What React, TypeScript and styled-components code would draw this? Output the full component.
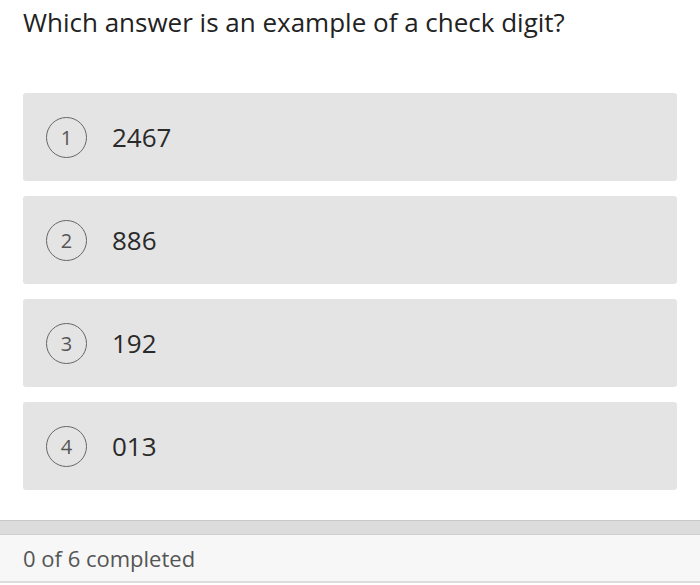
import styled, { createGlobalStyle } from "styled-components";

const GlobalStyle = createGlobalStyle`
  html, body {
    margin: 0;
    padding: 0;
    background: #ffffff;
    font-family: "Open Sans", "Liberation Sans", sans-serif;
  }
`;

const Page = styled.div`
  width: 700px;
  height: 585px;
  display: flex;
  flex-direction: column;
  overflow: hidden;
`;

const Question = styled.h1`
  margin: 0;
  padding: 4px 23px 0;
  font-size: 26px;
  font-weight: 400;
  line-height: 36px;
  color: #222;
`;

const Options = styled.div`
  display: flex;
  flex-direction: column;
  gap: 15px;
  padding: 53px 23px 0;
`;

const Option = styled.div`
  height: 88px;
  background: #e4e4e4;
  border-radius: 3px;
  display: flex;
  align-items: center;
  padding-left: 23px;
  gap: 25px;
`;

const Badge = styled.span`
  width: 39px;
  height: 39px;
  border: 1.5px solid #666;
  border-radius: 50%;
  display: flex;
  align-items: center;
  justify-content: center;
  font-size: 20px;
  color: #555;
  flex-shrink: 0;
`;

const Answer = styled.span`
  font-size: 26px;
  color: #2a2a2a;
`;

const Footer = styled.div`
  margin-top: 30px;
  border-top: 1px solid #c8c8c8;
  display: flex;
  flex-direction: column;
`;

const FooterBar = styled.div`
  height: 13px;
  background: #dcdcdc;
  border-bottom: 1px solid #d0d0d0;
`;

const FooterBody = styled.div`
  height: 46px;
  background: #f7f7f7;
  border-bottom: 2px solid #dcdcdc;
  display: flex;
  align-items: center;
  padding-left: 23px;
  font-size: 22px;
  color: #555;
`;

const answers = ["2467", "886", "192", "013"];

export default function App() {
  return (
    <Page>
      <GlobalStyle />
      <Question>Which answer is an example of a check digit?</Question>
      <Options>
        {answers.map((a, i) => (
          <Option key={a}>
            <Badge>{i + 1}</Badge>
            <Answer>{a}</Answer>
          </Option>
        ))}
      </Options>
      <Footer>
        <FooterBar />
        <FooterBody>0 of 6 completed</FooterBody>
      </Footer>
    </Page>
  );
}
